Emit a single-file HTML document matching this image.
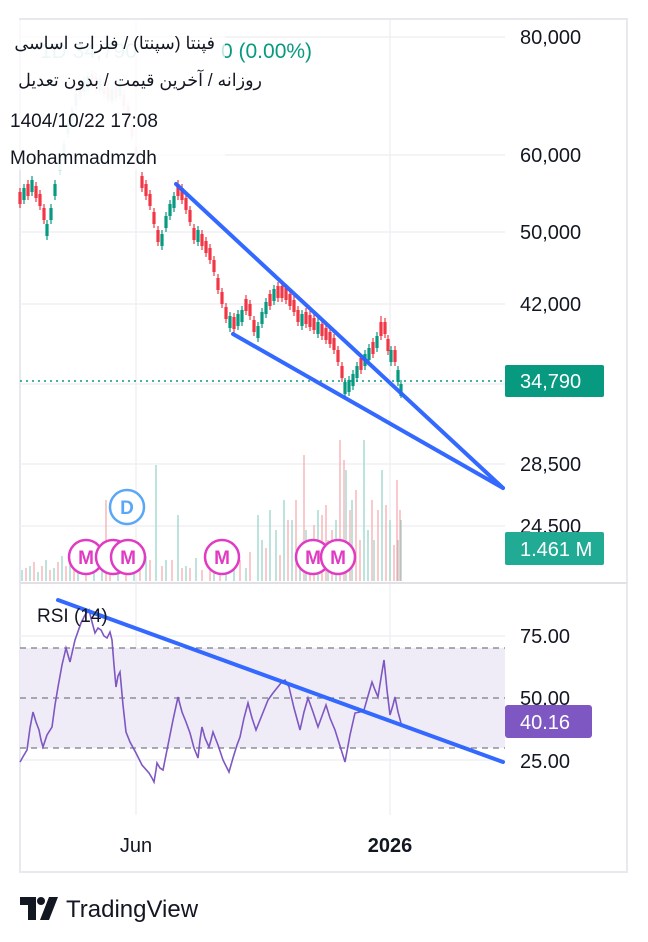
<!DOCTYPE html>
<html><head><meta charset="utf-8"><style>
html,body{margin:0;padding:0;background:#fff;width:648px;height:942px;overflow:hidden}
svg text{font-family:"Liberation Sans","Noto Sans CJK SC",sans-serif}
</style></head><body>
<svg width="648" height="942" viewBox="0 0 648 942" xmlns="http://www.w3.org/2000/svg">
<rect x="20" y="19" width="607" height="853" fill="#fff" stroke="#e8e8ef" stroke-width="2"/>
<g stroke="#f0f0f3" stroke-width="1.5">
<line x1="20" y1="37" x2="505" y2="37"/><line x1="20" y1="155" x2="505" y2="155"/>
<line x1="20" y1="232" x2="505" y2="232"/><line x1="20" y1="304" x2="505" y2="304"/>
<line x1="20" y1="384" x2="505" y2="384"/><line x1="20" y1="464" x2="505" y2="464"/>
<line x1="20" y1="526" x2="505" y2="526"/>
<line x1="136" y1="20" x2="136" y2="815"/><line x1="390" y1="20" x2="390" y2="815"/>
<line x1="20" y1="636" x2="505" y2="636"/><line x1="20" y1="760" x2="505" y2="760"/>
</g>
<line x1="20" y1="583" x2="627" y2="583" stroke="#e0e0e6" stroke-width="2"/>
<rect x="20" y="648" width="485" height="100" fill="#efecf7"/>
<g stroke="#787b86" stroke-width="1.3" stroke-dasharray="6,5">
<line x1="20" y1="648" x2="505" y2="648"/><line x1="20" y1="698" x2="505" y2="698"/><line x1="20" y1="748" x2="505" y2="748"/>
</g>
<path stroke="#8fd3c6" stroke-width="1.2" fill="none" d="M22 581V570M30 581V566M38 581V572M46 581V560M54 581V568M62 581V556M70 581V565M78 581V560M94 581V558M102 581V566M118 581V562M134 581V550M146 581V556M156 581V465M166 581V560M178 581V515M186 581V566M196 581V558M214 581V562M226 581V548M234 581V562M246 581V568M258 581V515M262 581V540M270 581V510M276 581V530M284 581V500M292 581V520M300 581V545M306 581V530M318 581V510M328 581V540M336 581V520M346 581V470M352 581V500M364 581V440M368 581V530M374 581V540M382 581V470M390 581V520M398 581V540M401 581V520"/>
<path stroke="#f7a5ab" stroke-width="1.2" fill="none" d="M26 581V568M34 581V562M42 581V566M50 581V570M58 581V562M66 581V566M74 581V558M86 581V565M106 581V500M110 581V562M126 581V566M140 581V570M150 581V560M162 581V566M172 581V560M182 581V568M190 581V568M202 581V570M210 581V555M220 581V566M240 581V560M250 581V552M266 581V548M280 581V555M288 581V520M296 581V500M304 581V455M310 581V540M314 581V525M322 581V515M326 581V505M332 581V530M340 581V440M344 581V460M350 581V510M356 581V490M360 581V540M372 581V500M378 581V510M386 581V505M394 581V545M397 581V480M400 581V510"/>
<g opacity="0.2" fill="none">
<path stroke="#089981" stroke-width="1.2" d="M60 155V175M64 140V160M68 118V138M72 105V125M76 90V110M84 76V96M88 72V92M100 75V95M112 85V105M120 80V100"/>
<path stroke="#089981" stroke-width="3.2" d="M60 159V171M64 144V156M68 122V134M72 109V121M76 94V106M84 80V92M88 76V88M100 79V91M112 89V101M120 84V96"/>
<path stroke="#f23645" stroke-width="1.2" d="M80 80V100M92 70V90M96 73V93M104 78V98M108 83V103M116 82V102M124 90V110M128 102V122M132 120V140M136 145V165"/>
<path stroke="#f23645" stroke-width="3.2" d="M80 84V96M92 74V86M96 77V89M104 82V94M108 87V99M116 86V98M124 94V106M128 106V118M132 124V136M136 149V161"/>
</g>
<path fill="none" stroke="#f23645" stroke-width="1.2" d="M20 188V208M28 180V200M36 182V202M40 190V210M44 204V224M142 172V192M146 180V200M150 190V210M154 208V228M158 226V246M178 180V200M182 184V204M186 194V214M190 206V226M194 224V244M202 230V250M206 237V257M210 244V264M214 256V276M218 274V294M222 288V308M226 303V323M234 313V333M246 295V315M250 300V320M254 316V336M270 290V310M278 282V302M282 282V302M286 284V304M290 290V310M294 296V316M298 306V326M306 308V328M310 311V331M314 314V334M322 320V340M326 324V344M330 328V348M334 334V354M338 346V366M342 362V382M361 354V374M373 338V358M381 316V340M385 318V338M388 335V355M395 346V366"/>
<path fill="none" stroke="#f23645" stroke-width="3.2" d="M20 192V204M28 184V196M36 186V198M40 194V206M44 208V220M142 176V188M146 184V196M150 194V206M154 212V224M158 230V242M178 184V196M182 188V200M186 198V210M190 210V222M194 228V240M202 234V246M206 241V253M210 248V260M214 260V272M218 278V290M222 292V304M226 307V319M234 317V329M246 299V311M250 304V316M254 320V332M270 294V306M278 286V298M282 286V298M286 288V300M290 294V306M294 300V312M298 310V322M306 312V324M310 315V327M314 318V330M322 324V336M326 328V340M330 332V344M334 338V350M338 350V362M342 366V378M361 358V370M373 342V354M381 322V336M385 322V334M388 339V351M395 350V362"/>
<path fill="none" stroke="#089981" stroke-width="1.2" d="M24 184V204M32 176V196M47 220V240M51 204V224M55 180V200M162 230V250M166 212V232M170 200V220M174 192V212M198 226V246M230 312V332M238 310V330M242 306V326M258 322V342M262 308V328M266 298V318M274 285V305M302 310V330M318 318V338M345 378V398M349 376V396M353 370V390M357 362V382M365 350V370M369 344V364M377 332V352M391 346V366M398 366V386M401 380V398"/>
<path fill="none" stroke="#089981" stroke-width="3.2" d="M24 188V200M32 180V192M47 224V236M51 208V220M55 184V196M162 234V246M166 216V228M170 204V216M174 196V208M198 230V242M230 316V328M238 314V326M242 310V322M258 326V338M262 312V324M266 302V314M274 289V301M302 314V326M318 322V334M345 382V394M349 380V392M353 374V386M357 366V378M365 354V366M369 348V360M377 336V348M391 350V362M398 370V382M401 384V396"/>
<line x1="20" y1="381" x2="505" y2="381" stroke="#089981" stroke-width="1.5" stroke-dasharray="2,4"/>
<polyline fill="none" stroke="#7e57c2" stroke-width="1.6" points="20,762 24,755 27,750 30,728 33,712 36,722 39,730 41,740 43,747 47,735 52,727 55,705 58,687 62,665 66,648 68,655 70,662 75,640 81,623 85,615 89,610 92,622 95,633 98,628 101,630 104,636 107,638 110,632 112,640 114,665 116,687 118,676 120,672 123,705 126,732 130,742 136,753 142,765 149,773 152,778 154,782 156,770 157,763 160,768 163,770 168,745 173,720 178,697 182,712 186,722 190,733 194,748 198,758 200,740 202,727 205,738 209,747 211,740 213,732 218,745 223,760 229,772 233,758 237,745 240,737 244,718 248,703 252,718 256,730 260,720 264,710 268,700 273,693 277,688 281,683 285,680 289,687 294,708 300,730 304,712 308,698 313,712 318,727 322,716 326,705 330,718 335,730 340,746 345,762 350,735 355,713 360,712 364,710 368,696 372,682 375,690 378,697 381,678 384,660 387,690 390,715 393,705 395,697 398,712 401,723"/>
<g stroke="#2962ff" stroke-width="4" stroke-linecap="round" opacity="0.95">
<line x1="176" y1="184" x2="503" y2="488"/><line x1="233" y1="334" x2="503" y2="488"/>
<line x1="58" y1="600" x2="503" y2="762"/>
</g>
<g font-weight="bold" font-size="19" text-anchor="middle">
<circle cx="127" cy="507" r="17" fill="#fff" stroke="#5aa7f7" stroke-width="2.5"/><text x="127" y="514" fill="#5aa7f7">D</text>
<g fill="#fff" stroke="#e03bc2" stroke-width="2.5">
<circle cx="86" cy="557" r="17"/><circle cx="113" cy="557" r="17"/><circle cx="128" cy="557" r="17"/><circle cx="222" cy="557" r="17"/><circle cx="313" cy="557" r="17"/><circle cx="338" cy="557" r="17"/></g>
<g fill="#e03bc2"><text x="86" y="564">M</text><text x="128" y="564">M</text><text x="222" y="564">M</text><text x="313" y="564">M</text><text x="338" y="564">M</text></g>
</g>
<text x="40" y="58" font-size="21" fill="#089981" opacity="0.3">1D  34,790</text>
<text x="221" y="58" font-size="21" fill="#089981">0 (0.00%)</text>
<rect x="0" y="20" width="225" height="150" fill="#fff" opacity="0.75"/>
<g fill="#131722">
<text x="215" y="49" text-anchor="end" font-size="17.5">فپنتا (سپنتا) / فلزات اساسی</text>
<text x="262" y="86" text-anchor="end" font-size="17.5">روزانه / آخرین قیمت / بدون تعدیل</text>
<text x="10" y="127" font-size="19">1404/10/22 17:08</text>
<text x="10" y="164" font-size="19">Mohammadmzdh</text>
<text x="37" y="622" font-size="19">RSI (14)</text>
</g>
<g font-size="20" fill="#131722">
<text x="520" y="44">80,000</text><text x="520" y="162">60,000</text><text x="520" y="239">50,000</text>
<text x="520" y="311">42,000</text><text x="520" y="471">28,500</text><text x="520" y="533">24,500</text>
<text x="520" y="643">75.00</text><text x="520" y="705">50.00</text><text x="520" y="768">25.00</text>
<text x="136" y="852" text-anchor="middle">Jun</text><text x="390" y="852" text-anchor="middle" font-weight="bold">2026</text>
</g>
<rect x="505" y="365" width="99" height="32" rx="2" fill="#089981"/><text x="520" y="388" font-size="20" fill="#fff">34,790</text>
<rect x="505" y="532" width="99" height="33" rx="2" fill="#22ab94"/><text x="520" y="556" font-size="20" fill="#fff">1.461 M</text>
<rect x="505" y="705" width="87" height="33" rx="3" fill="#7e57c2"/><text x="520" y="729" font-size="20" fill="#fff">40.16</text>
<g fill="#131722"><path d="M20 897h16v23h-8v-15h-8z"/><circle cx="41" cy="901" r="4"/><path d="M49 897h9l-9 23h-9z"/></g>
<text x="66" y="917" font-size="24" fill="#131722">TradingView</text>
</svg>
</body></html>
